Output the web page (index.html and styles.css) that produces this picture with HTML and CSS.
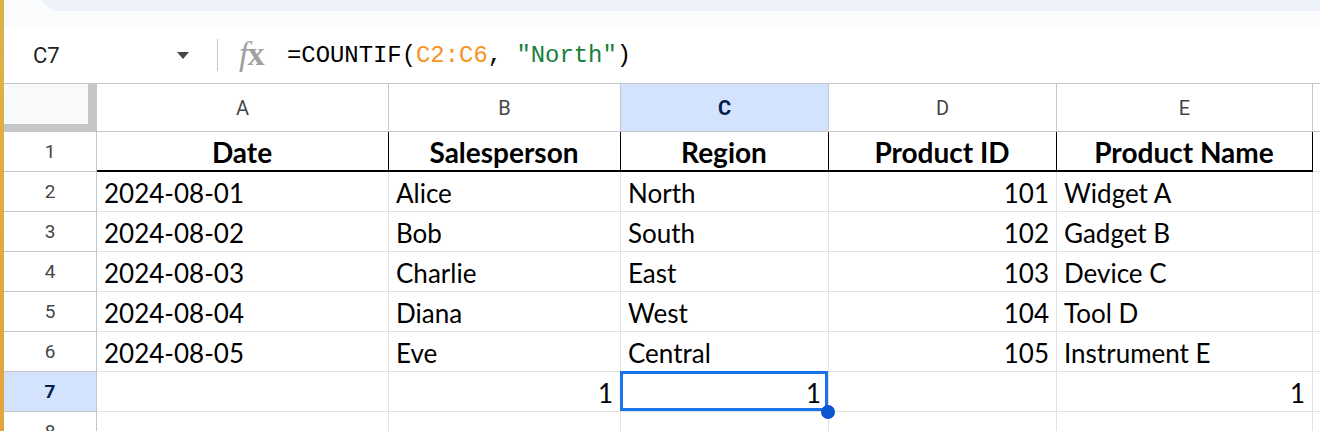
FILE: index.html
```html
<!DOCTYPE html>
<html lang="en">
<head>
<meta charset="utf-8">
<title>Sheet</title>
<link rel="stylesheet" href="styles.css">
</head>
<body>
<div class="app">
  <div class="edge"></div>
  <div class="main">
    <div class="chrome"><div class="toolbar"></div></div>
    <div class="fbar">
      <div class="namebox">
        <span class="cellref">C7</span>
        <svg class="caret" width="12" height="7" viewBox="0 0 12 7"><path d="M0 0h12L6 7z" fill="#444746"/></svg>
      </div>
      <div class="divider"></div>
      <div class="fx"><span class="fx-f">f</span><span class="fx-x">x</span></div>
      <div class="formula">=COUNTIF(<span class="ref">C2:C6</span>, <span class="str">"North"</span>)</div>
    </div>
    <div class="grid">
      <div class="corner"></div>
      <div class="colh">A</div>
      <div class="colh">B</div>
      <div class="colh active">C</div>
      <div class="colh">D</div>
      <div class="colh">E</div>
      <div class="colh"></div>

      <div class="rowh">1</div>
      <div class="cell head">Date</div>
      <div class="cell head">Salesperson</div>
      <div class="cell head">Region</div>
      <div class="cell head">Product ID</div>
      <div class="cell head">Product Name</div>
      <div class="cell"></div>

      <div class="rowh">2</div>
      <div class="cell">2024-08-01</div>
      <div class="cell">Alice</div>
      <div class="cell">North</div>
      <div class="cell num">101</div>
      <div class="cell">Widget A</div>
      <div class="cell"></div>

      <div class="rowh">3</div>
      <div class="cell">2024-08-02</div>
      <div class="cell">Bob</div>
      <div class="cell">South</div>
      <div class="cell num">102</div>
      <div class="cell">Gadget B</div>
      <div class="cell"></div>

      <div class="rowh">4</div>
      <div class="cell">2024-08-03</div>
      <div class="cell">Charlie</div>
      <div class="cell">East</div>
      <div class="cell num">103</div>
      <div class="cell">Device C</div>
      <div class="cell"></div>

      <div class="rowh">5</div>
      <div class="cell">2024-08-04</div>
      <div class="cell">Diana</div>
      <div class="cell">West</div>
      <div class="cell num">104</div>
      <div class="cell">Tool D</div>
      <div class="cell"></div>

      <div class="rowh">6</div>
      <div class="cell">2024-08-05</div>
      <div class="cell">Eve</div>
      <div class="cell">Central</div>
      <div class="cell num">105</div>
      <div class="cell">Instrument E</div>
      <div class="cell"></div>

      <div class="rowh active">7</div>
      <div class="cell"></div>
      <div class="cell num">1</div>
      <div class="cell num selected">1<span class="sel"></span><span class="handle"></span></div>
      <div class="cell"></div>
      <div class="cell num">1</div>
      <div class="cell"></div>

      <div class="rowh">8</div>
      <div class="cell"></div>
      <div class="cell"></div>
      <div class="cell"></div>
      <div class="cell"></div>
      <div class="cell"></div>
      <div class="cell"></div>
    </div>
  </div>
</div>
</body>
</html>
```

FILE: styles.css
```css
* { box-sizing: border-box; }
html, body {
  margin: 0;
  padding: 0;
  width: 1320px;
  height: 431px;
  overflow: hidden;
  background: #ffffff;
}
.app {
  display: flex;
  height: 431px;
}
.edge {
  width: 4px;
  flex: none;
  background: linear-gradient(#dcb24a, #e0a63c);
}
.main {
  flex: 1;
  display: flex;
  flex-direction: column;
  min-width: 0;
}
.chrome {
  height: 27px;
  background: #f9fbfd;
  overflow: hidden;
  flex: none;
}
.toolbar {
  height: 40px;
  margin-top: -29px;
  margin-left: 36px;
  margin-right: -40px;
  background: #edf2fa;
  border-radius: 22px;
}
.fbar {
  height: 57px;
  flex: none;
  display: flex;
  align-items: center;
  border-bottom: 1px solid #c4c7c5;
  background: #fff;
}
.namebox {
  width: 213px;
  display: flex;
  align-items: center;
  padding-left: 29px;
  padding-right: 28px;
  justify-content: space-between;
}
.cellref {
  font-family: Roboto, "Liberation Sans", sans-serif;
  font-size: 22px;
  color: #1f1f1f;
}
.caret { display: block; margin-top: 1px; }
.divider {
  width: 1px;
  height: 32px;
  background: #c4c7c5;
  margin-right: 21px;
}
.fx {
  font-family: "Liberation Serif", serif;
  color: #a0a0a0;
  font-size: 34px;
  width: 48px;
  display: flex;
  align-items: baseline;
  margin-top: -3px;
}
.fx-f { font-style: italic; }
.fx-x { font-weight: bold; margin-left: -1px; }
.formula {
  font-family: "Liberation Mono", monospace;
  font-size: 23.9px;
  color: #000;
  white-space: pre;
}
.ref { color: #f7931e; }
.str { color: #188038; }

.grid {
  display: grid;
  grid-template-columns: 93px 292px 232px 208px 228px 256px 1fr;
  grid-template-rows: 48px repeat(8, 40px);
  overflow: hidden;
}
.corner {
  background: #f8f9fa;
  border-right: 9px solid #c4c7c5;
  border-bottom: 8px solid #c4c7c5;
}
.colh {
  display: flex;
  align-items: center;
  justify-content: center;
  font-family: Roboto, "Liberation Sans", sans-serif;
  font-size: 20px;
  color: #444746;
  border-right: 1px solid #c4c7c5;
  border-bottom: 1px solid #c4c7c5;
  background: #fff;
}
.colh.active, .rowh.active {
  background: #d3e3fd;
  color: #041e49;
  font-weight: bold;
}
.rowh {
  display: flex;
  align-items: center;
  justify-content: center;
  font-family: Roboto, "Liberation Sans", sans-serif;
  font-size: 19px;
  color: #444746;
  border-right: 1px solid #c4c7c5;
  border-bottom: 1px solid #c4c7c5;
  background: #fff;
}
.cell {
  position: relative;
  display: flex;
  align-items: center;
  padding: 3px 8px 0 7px;
  font-family: Lato, "Open Sans", sans-serif;
  font-size: 26px;
  color: #000;
  white-space: nowrap;
  border-right: 1px solid #e1e1e1;
  border-bottom: 1px solid #e1e1e1;
}
.cell.num {
  justify-content: flex-end;
  padding-right: 7px;
}
.cell.head {
  justify-content: center;
  font-weight: bold;
  font-size: 28px;
  padding-top: 2px;
  border-right-color: #000;
  border-bottom: 2px solid #000;
}
.sel {
  position: absolute;
  left: -1px;
  top: -1px;
  right: 0;
  bottom: 0;
  border: 3px solid #1a73e8;
}
.handle {
  position: absolute;
  width: 14px;
  height: 14px;
  right: -7px;
  bottom: -8px;
  border-radius: 50%;
  background: #0b57d0;
  z-index: 2;
}
```
